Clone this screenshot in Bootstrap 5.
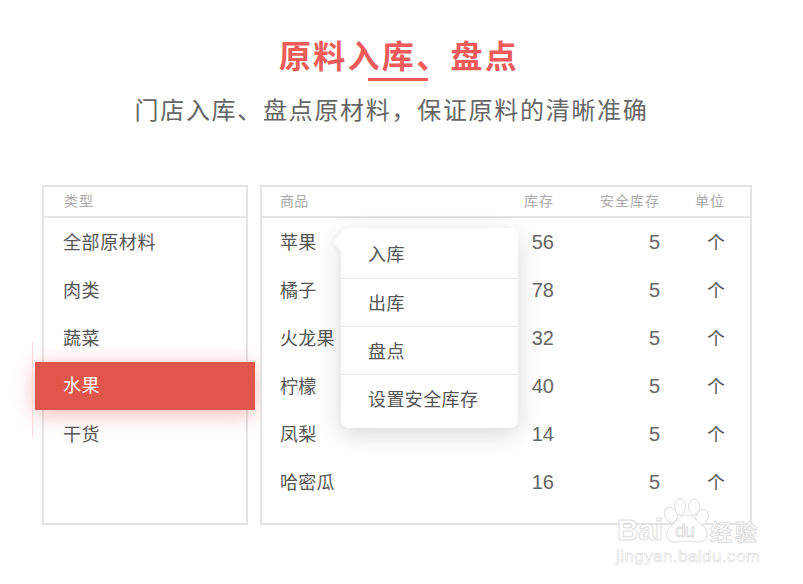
<!DOCTYPE html>
<html lang="zh-CN">
<head>
    <meta charset="UTF-8">
    <title>原料入库、盘点</title>
    <link href="https://cdn.jsdelivr.net/npm/bootstrap@5.3.3/dist/css/bootstrap.min.css" rel="stylesheet">
    <style>
        body {
            background: #fff;
            color: #555;
            font-family: "Liberation Sans", "Noto Sans CJK SC", sans-serif;
            overflow: hidden;
        }
        .page-wrap { position: relative; width: 803px; height: 584px; padding: 36px 51px 0 42px; }
        .hero-title {
            font-size: 32px; line-height: 42px; font-weight: 700; letter-spacing: 2.3px;
            color: #ef5a5a; margin: 0; padding-left: 4px;
        }
        .hero-rule { width: 60px; height: 3px; background: #ef5a5a; margin: 0 0 0 326px; border: 0; opacity: 1; }
        .hero-sub {
            font-size: 24px; line-height: 32px; letter-spacing: 1.7px; color: #666;
            margin: 14px 0 0; padding-right: 11px;
        }
        .panels { margin-top: 58px; gap: 12px; height: 340px; }
        .panel-box { border: 2px solid #e4e4e4; background: #fff; position: relative; }
        .panel-left { width: 206px; }
        .panel-right { width: 492px; }
        .panel-head {
            height: 31px; border-bottom: 2px solid #e4e4e4; font-size: 14px; color: #aaa;
            letter-spacing: 1px; line-height: 29px;
        }
        .panel-left .panel-head { padding-left: 20px; }
        .cat-item { height: 48px; line-height: 50px; font-size: 18px; letter-spacing: .6px; padding-left: 19px; color: #555; }
        .cat-active {
            position: relative; background: #e0564a; color: #fff; line-height: 48px;
            margin: 0 -9px 0 -9px; padding-left: 28px;
            box-shadow: 0 4px 22px rgba(224, 86, 74, .42);
        }
        .cat-active::before {
            content: ""; position: absolute; left: -3px; top: -20px; height: 95px; width: 1px; background: #f9d9d6;
        }
        .goods-row { height: 48px; line-height: 50px; padding-left: 18px; }
        .goods-head { padding-left: 18px; }
        .goods-name { flex: 0 0 auto; width: 232px; font-size: 18px; letter-spacing: .2px; }
        .goods-stock { width: 42px; text-align: right; font-size: 20px; color: #666; line-height: 48px; }
        .goods-safe { width: 106px; text-align: right; font-size: 20px; color: #666; line-height: 48px; }
        .goods-unit { width: 65px; text-align: right; font-size: 18px; }
        .goods-head .goods-name, .goods-head .goods-stock, .goods-head .goods-safe, .goods-head .goods-unit {
            font-size: 14px; color: #aaa; line-height: 29px;
        }
        .action-menu {
            position: absolute; left: 79px; top: 41px; width: 177px; background: #fff;
            border-radius: 8px; box-shadow: 0 6px 24px rgba(0, 0, 0, .16);
        }
        .action-menu::before {
            content: ""; position: absolute; left: -6px; top: 7px; width: 14px; height: 14px;
            background: #fff; transform: rotate(45deg); border-radius: 1px;
            box-shadow: -2px 2px 4px rgba(0, 0, 0, .04);
        }
        .action-item {
            position: relative; height: 48px; line-height: 50px; padding-left: 27px; font-size: 18px;
            letter-spacing: .4px; color: #555; border-bottom: 1px solid #e8e8e8;
        }
        .action-item:first-child { height: 51px; line-height: 54px; }
        .action-item:last-child { border-bottom: 0; height: 53px; }
        .watermark { position: absolute; left: 615px; top: 496px; width: 150px; height: 75px; }
        .wm-text { fill: #fff; stroke: #dedede; stroke-width: 1; font-family: "Liberation Sans", "Noto Sans CJK SC", sans-serif; }
        .wm-thin { stroke-width: .6; }
    </style>
</head>
<body>
    <div class="page-wrap">
        <div class="text-center">
            <h1 class="hero-title">原料入库、盘点</h1>
            <hr class="hero-rule">
            <p class="hero-sub">门店入库、盘点原材料，保证原料的清晰准确</p>
        </div>

        <div class="panels d-flex">
            <!-- categories -->
            <div class="panel-box panel-left">
                <div class="panel-head">类型</div>
                <div class="cat-item">全部原材料</div>
                <div class="cat-item">肉类</div>
                <div class="cat-item">蔬菜</div>
                <div class="cat-item cat-active">水果</div>
                <div class="cat-item">干货</div>
            </div>

            <!-- goods -->
            <div class="panel-box panel-right">
                <div class="panel-head goods-head d-flex">
                    <div class="goods-name">商品</div>
                    <div class="goods-stock">库存</div>
                    <div class="goods-safe">安全库存</div>
                    <div class="goods-unit">单位</div>
                </div>
                <div class="goods-row d-flex"><div class="goods-name">苹果</div><div class="goods-stock">56</div><div class="goods-safe">5</div><div class="goods-unit">个</div></div>
                <div class="goods-row d-flex"><div class="goods-name">橘子</div><div class="goods-stock">78</div><div class="goods-safe">5</div><div class="goods-unit">个</div></div>
                <div class="goods-row d-flex"><div class="goods-name">火龙果</div><div class="goods-stock">32</div><div class="goods-safe">5</div><div class="goods-unit">个</div></div>
                <div class="goods-row d-flex"><div class="goods-name">柠檬</div><div class="goods-stock">40</div><div class="goods-safe">5</div><div class="goods-unit">个</div></div>
                <div class="goods-row d-flex"><div class="goods-name">凤梨</div><div class="goods-stock">14</div><div class="goods-safe">5</div><div class="goods-unit">个</div></div>
                <div class="goods-row d-flex"><div class="goods-name">哈密瓜</div><div class="goods-stock">16</div><div class="goods-safe">5</div><div class="goods-unit">个</div></div>

                <div class="action-menu">
                    <div class="action-item">入库</div>
                    <div class="action-item">出库</div>
                    <div class="action-item">盘点</div>
                    <div class="action-item">设置安全库存</div>
                </div>
            </div>
        </div>

        <!-- watermark -->
        <svg class="watermark" viewBox="0 0 150 75">
            <g fill="#fff" stroke="#dedede" stroke-width="1">
                <ellipse cx="56" cy="19" rx="6" ry="8" transform="rotate(-25 56 19)"/>
                <ellipse cx="65" cy="11" rx="5.5" ry="8"/>
                <ellipse cx="79" cy="11" rx="5.5" ry="8"/>
                <ellipse cx="87" cy="21" rx="6" ry="8" transform="rotate(25 87 21)"/>
                <path d="M72 19c8 0 10 7 16 11 6 4 6 14-2 16-5 1-9-1-14-1s-9 2-14 1c-8-2-8-12-2-16 6-4 8-11 16-11z"/>
            </g>
            <text class="wm-text" x="2" y="44" font-size="30" font-weight="700" textLength="46">Bai</text>
            <text class="wm-text" x="60" y="41" font-size="19" textLength="20">du</text>
            <text class="wm-text" x="95" y="44" font-size="22" font-weight="700" textLength="47">经验</text>
            <text class="wm-text wm-thin" x="1" y="66" font-size="17" textLength="144">jingyan.baidu.com</text>
        </svg>
    </div>

    <script src="https://cdn.jsdelivr.net/npm/bootstrap@5.3.3/dist/js/bootstrap.bundle.min.js"></script>
</body>
</html>
